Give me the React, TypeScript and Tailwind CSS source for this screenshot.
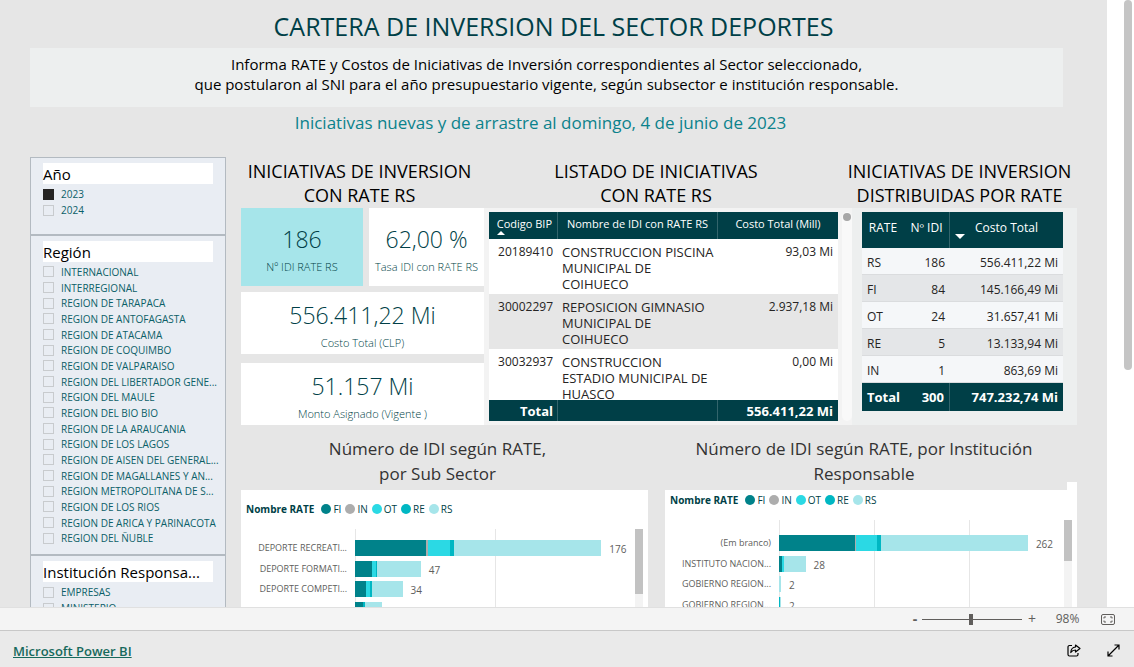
import React, { useState } from 'react';

type Serie = 'FI' | 'IN' | 'OT' | 'RE' | 'RS';

type ChartRow = {
  label: string;
  total: number;
  values: Partial<Record<Serie, number>>;
};

const series: { name: Serie; color: string }[] = [
  { name: 'FI', color: 'bg-[#00828a]' },
  { name: 'IN', color: 'bg-[#adadad]' },
  { name: 'OT', color: 'bg-[#2bd9e4]' },
  { name: 'RE', color: 'bg-[#00b7c3]' },
  { name: 'RS', color: 'bg-[#a6e5ea]' },
];

const regions = [
  'INTERNACIONAL',
  'INTERREGIONAL',
  'REGION DE TARAPACA',
  'REGION DE ANTOFAGASTA',
  'REGION DE ATACAMA',
  'REGION DE COQUIMBO',
  'REGION DE VALPARAISO',
  'REGION DEL LIBERTADOR GENE...',
  'REGION DEL MAULE',
  'REGION DEL BIO BIO',
  'REGION DE LA ARAUCANIA',
  'REGION DE LOS LAGOS',
  'REGION DE AISEN DEL GENERAL...',
  'REGION DE MAGALLANES Y AN...',
  'REGION METROPOLITANA DE S...',
  'REGION DE LOS RIOS',
  'REGION DE ARICA Y PARINACOTA',
  'REGION DEL ÑUBLE',
];

const iniciativas = [
  { codigo: '20189410', nombre: ['CONSTRUCCION PISCINA', 'MUNICIPAL DE', 'COIHUECO'], costo: '93,03 Mi' },
  { codigo: '30002297', nombre: ['REPOSICION GIMNASIO', 'MUNICIPAL DE', 'COIHUECO'], costo: '2.937,18 Mi' },
  { codigo: '30032937', nombre: ['CONSTRUCCION', 'ESTADIO MUNICIPAL DE', 'HUASCO'], costo: '0,00 Mi' },
];

const rates = [
  { rate: 'RS', idi: '186', costo: '556.411,22 Mi' },
  { rate: 'FI', idi: '84', costo: '145.166,49 Mi' },
  { rate: 'OT', idi: '24', costo: '31.657,41 Mi' },
  { rate: 'RE', idi: '5', costo: '13.133,94 Mi' },
  { rate: 'IN', idi: '1', costo: '863,69 Mi' },
];

const subSectores: ChartRow[] = [
  { label: 'DEPORTE RECREATI...', total: 176, values: { FI: 51, IN: 1, OT: 16, RE: 3, RS: 105 } },
  { label: 'DEPORTE FORMATI...', total: 47, values: { FI: 12, OT: 3, RE: 1, RS: 31 } },
  { label: 'DEPORTE COMPETI...', total: 34, values: { FI: 8, OT: 3, RE: 1, RS: 22 } },
  { label: '', total: 0, values: { FI: 6, RE: 1, RS: 12 } },
];

const instituciones: ChartRow[] = [
  { label: '(Em branco)', total: 262, values: { FI: 80, IN: 1, OT: 22, RE: 4, RS: 155 } },
  { label: 'INSTITUTO NACION...', total: 28, values: { FI: 3, OT: 2, RS: 23 } },
  { label: 'GOBIERNO REGION...', total: 2, values: { RS: 2 } },
  { label: 'GOBIERNO REGION...', total: 2, values: { RE: 1, RS: 1 } },
];

const CheckItem = ({ label, defaultChecked = false }: { label: string; defaultChecked?: boolean }) => (
  <label className="flex items-center gap-[7px] text-[10px] leading-4 text-[#0b5f68] whitespace-nowrap">
    <input
      type="checkbox"
      defaultChecked={defaultChecked}
      className="appearance-none size-[11px] shrink-0 border border-[#c8cbce] checked:bg-[#252423] checked:border-[#252423]"
    />
    {label}
  </label>
);

const Slicer = ({ title, children }: { title: string; children: React.ReactNode }) => (
  <fieldset className="min-w-0 border border-[#b3bac1] bg-[#e9edf3] px-3 pt-[5px]">
    <div className="h-[21px] bg-white text-[15px] leading-[22px] text-black">{title}</div>
    {children}
  </fieldset>
);

const Card = ({ value, label, className = '' }: { value: string; label: string; className?: string }) => (
  <div className={`flex flex-col items-center justify-center gap-1 text-[#003f47] ${className}`}>
    <span className="text-[23px] leading-8 font-light whitespace-nowrap">{value}</span>
    <span className="text-[11px] leading-4 font-light whitespace-nowrap">{label}</span>
  </div>
);

type BarChartProps = {
  rows: ChartRow[];
  max: number;
  ticks: number;
  thumb: string;
  inset: string;
};

const BarChart = ({ rows, max, ticks, thumb, inset }: BarChartProps) => (
  <div className="flex min-h-0 flex-1 overflow-hidden pr-[5px]">
    <div className={`w-[114px] shrink-0 pr-2 ${inset}`}>
      <div className="grid h-[82px] auto-rows-fr items-center">
        {rows.map((row, index) => (
          <div key={index} className="text-right text-[9px] leading-4 text-[#605e5c] whitespace-nowrap">
            {row.label}
          </div>
        ))}
      </div>
    </div>
    <div className="relative flex-1">
      <div className="absolute inset-0 flex">
        {Array.from({ length: ticks }, (_, index) => (
          <div key={index} className="flex-1 border-l border-[#e6e6e6]" />
        ))}
      </div>
      <div className={`relative ${inset}`}>
        <div className="grid h-[82px] auto-rows-fr">
          {rows.map((row, index) => (
            <div key={index} className="flex items-center">
              {series.map((serie) => (
                <div
                  key={serie.name}
                  className={`h-4 shrink-0 ${serie.color}`}
                  style={{ width: `${((row.values[serie.name] ?? 0) / max) * 100}%` }}
                />
              ))}
              {row.total > 0 && (
                <span className="pl-2 pt-0.5 text-[10px] leading-4 text-[#605e5c]">{row.total}</span>
              )}
            </div>
          ))}
        </div>
      </div>
    </div>
    <div className="w-2 bg-[#f3f3f3]">
      <div className={`w-full bg-[#c2c2c2] ${thumb}`} />
    </div>
  </div>
);

const Legend = () => (
  <div className="flex items-center pl-[5px] text-[10px] leading-4 text-[#003f47]">
    <span className="font-bold pr-[7px]">Nombre RATE</span>
    {series.map((serie) => (
      <span key={serie.name} className="flex items-center gap-0.5 pr-1">
        <span className={`size-[10px] rounded-full ${serie.color}`} />
        {serie.name}
      </span>
    ))}
  </div>
);

const ZoomBar = () => {
  const [zoom, setZoom] = useState(49);

  return (
    <div className="flex h-6 shrink-0 items-center justify-end border-y border-t-[#e0e0e0] border-b-[#c8c8c8] bg-[#f4f4f4] pr-[19px] text-[#605e5c]">
      <button type="button" aria-label="Alejar" className="w-[14px] text-sm leading-4 font-bold">-</button>
      <input
        type="range"
        aria-label="Zoom"
        value={zoom}
        onChange={(e) => setZoom(Number(e.target.value))}
        className="h-[11px] w-[100px] appearance-none bg-[linear-gradient(#605e5c,#605e5c)] bg-[length:100%_1px] bg-center bg-no-repeat [&::-webkit-slider-thumb]:h-[11px] [&::-webkit-slider-thumb]:w-1 [&::-webkit-slider-thumb]:appearance-none [&::-webkit-slider-thumb]:bg-[#605e5c]"
      />
      <button type="button" aria-label="Acercar" className="w-5 text-sm leading-4">+</button>
      <span className="w-[51px] text-center text-xs leading-4">98%</span>
      <button type="button" aria-label="Ajustar a la página" className="ml-2">
        <svg width="14" height="11" viewBox="0 0 14 11" fill="none" stroke="currentColor">
          <rect x="0.5" y="0.5" width="13" height="10" rx="1.5" />
          <path d="M5 3H3v1.5M3 6.5V8h2M9 3h2v1.5M11 6.5V8H9" />
        </svg>
      </button>
    </div>
  );
};

export default function App() {
  return (
    <div className="flex h-screen flex-col overflow-hidden bg-white font-['Open_Sans','Noto_Sans',sans-serif]">
      <div className="flex min-h-0 flex-1 overflow-hidden">
        <main className="flex min-w-0 flex-1 flex-col bg-[#e6e6e6] px-[30px]">
          <h1 className="pt-[9px] pb-[5px] text-center text-[25px] leading-[34px] text-[#003f47]">
            CARTERA DE INVERSION DEL SECTOR DEPORTES
          </h1>
          <div className="mr-3.5">
            <p className="h-[59px] bg-[#edefef] pt-1.5 text-center text-[15px] leading-5 text-black">
              Informa RATE y Costos de Iniciativas de Inversión correspondientes al Sector seleccionado,
              <br />
              que postularon al SNI para el año presupuestario vigente, según subsector e institución responsable.
            </p>
            <h2 className="pt-1 pr-3 text-center text-[17px] leading-6 text-[#0b828c]">
              Iniciativas nuevas y de arrastre al domingo, 4 de junio de 2023
            </h2>
          </div>

          <div className="mt-[22px] flex min-h-0 flex-1 gap-[15px] overflow-hidden">
            <aside className="w-[196px] shrink-0">
              <Slicer title="Año">
                <div className="h-[50px] pt-[2px]">
                  <CheckItem label="2023" defaultChecked />
                  <CheckItem label="2024" />
                </div>
              </Slicer>
              <Slicer title="Región">
                <div className="grid h-[292px] auto-rows-fr pt-[2px] pb-2">
                  {regions.map((region) => (
                    <CheckItem key={region} label={region} />
                  ))}
                </div>
              </Slicer>
              <Slicer title="Institución Responsa...">
                <div className="pt-[2px]">
                  <CheckItem label="EMPRESAS" />
                  <CheckItem label="MINISTERIO" />
                </div>
              </Slicer>
            </aside>

            <div className="flex min-w-0 flex-1 flex-col">
              <div className="grid grid-cols-[243fr_368fr_225fr] text-center text-lg leading-6 text-black">
                <h3 className="h-[51px] pt-0.5 pr-1.5">INICIATIVAS DE INVERSION<br />CON RATE RS</h3>
                <h3 className="h-[51px] pt-0.5 pr-6">LISTADO DE INICIATIVAS<br />CON RATE RS</h3>
                <h3 className="-mx-2 h-[51px] pt-0.5 pr-2.5">INICIATIVAS DE INVERSION<br />DISTRIBUIDAS POR RATE</h3>
              </div>

              <div className="grid grid-cols-[243fr_368fr_225fr]">
                <div className="flex flex-col">
                  <div className="flex gap-1.5">
                    <Card value="186" label="Nº IDI RATE RS" className="h-[78px] flex-[122] bg-[#a6e5ea] pt-1" />
                    <Card value="62,00 %" label="Tasa IDI con RATE RS" className="h-[78px] flex-[115] bg-white pt-1" />
                  </div>
                  <Card value="556.411,22 Mi" label="Costo Total (CLP)" className="mt-1.5 h-[62px] bg-white pt-1" />
                  <Card value="51.157 Mi" label="Monto Asignado (Vigente )" className="mt-[9px] h-[62px] bg-white pt-1" />
                </div>

                <div className="flex h-[217px] gap-1 bg-[#f3f3f3] pt-1 pl-[5px] pb-1">
                  <div className="flex-1 overflow-hidden">
                    <table className="w-full table-fixed border-separate border-spacing-0 text-xs leading-4 text-[#252423]">
                      <thead className="sticky top-0 text-[11px] whitespace-nowrap text-white">
                        <tr className="h-[27px] bg-[#003f47] align-top">
                          <th className="w-[69px] border-r border-[#33656c] pt-1 pr-[5px] text-right font-normal">
                            <span className="relative">
                              Codigo BIP
                              <span className="absolute top-[15px] left-0 border-x-4 border-b-4 border-x-transparent border-b-white" />
                            </span>
                          </th>
                          <th className="w-[160px] border-r border-[#33656c] pt-1 font-normal">Nombre de IDI con RATE RS</th>
                          <th className="pt-1 font-normal">Costo Total (Mill)</th>
                        </tr>
                      </thead>
                      <tbody>
                        {iniciativas.map((item) => (
                          <tr key={item.codigo} className="h-[55px] bg-white align-top even:bg-[#e6e6e6]">
                            <td className="pt-[5px] pr-[5px] text-right">{item.codigo}</td>
                            <td className="pt-[5px] pl-1 text-[13px] leading-4 whitespace-nowrap">
                              {item.nombre.map((line) => (
                                <div key={line}>{line}</div>
                              ))}
                            </td>
                            <td className="pt-[5px] pr-[5px] text-right">{item.costo}</td>
                          </tr>
                        ))}
                      </tbody>
                      <tfoot className="sticky bottom-0 text-[13px] font-bold text-white">
                        <tr className="h-[21px] bg-[#003f47]">
                          <td className="border-r border-[#33656c] pr-1 text-right">Total</td>
                          <td className="border-r border-[#33656c]" />
                          <td className="pr-[5px] text-right">556.411,22 Mi</td>
                        </tr>
                      </tfoot>
                    </table>
                  </div>
                  <div className="w-[10px] rounded-full bg-[#f9f9f9] p-px">
                    <div className="size-2 rounded-full bg-[#a6a6a6]" />
                  </div>
                </div>

                <div className="bg-[#edefef] pt-1 pr-3.5 pl-2.5">
                  <table className="w-full table-fixed border-separate border-spacing-0 text-xs leading-4 text-[#252423]">
                    <thead>
                      <tr className="h-9 bg-[#003f47] text-white">
                        <th className="w-[42px] pb-1 font-normal">RATE</th>
                        <th className="w-[46px] border-r border-[#33656c] pb-1 font-normal">Nº IDI</th>
                        <th className="pb-1 font-normal">
                          <span className="relative">
                            Costo Total
                            <span className="absolute top-[15px] -left-5 border-x-[5px] border-t-[5px] border-x-transparent border-t-white" />
                          </span>
                        </th>
                      </tr>
                    </thead>
                    <tbody>
                      {rates.map((item) => (
                        <tr key={item.rate} className="h-[27px] bg-[#f5f7f9] even:bg-[#e4e6e8]">
                          <td className="border-b border-[#dadcde] pt-1 pl-[5px]">{item.rate}</td>
                          <td className="border-b border-[#dadcde] pt-1 pr-[5px] text-right">{item.idi}</td>
                          <td className="border-b border-[#dadcde] pt-1 pr-[5px] text-right">{item.costo}</td>
                        </tr>
                      ))}
                    </tbody>
                    <tfoot className="text-[13px] font-bold text-white">
                      <tr className="h-[28px] bg-[#003f47]">
                        <td className="pl-[5px]">Total</td>
                        <td className="border-r border-[#33656c] pr-[5px] text-right">300</td>
                        <td className="pr-[5px] text-right">747.232,74 Mi</td>
                      </tr>
                    </tfoot>
                  </table>
                </div>
              </div>

              <div className="mt-[11px] grid min-h-0 flex-1 grid-cols-[407fr_412fr] gap-[17px]">
                <section className="flex min-h-0 flex-col">
                  <h3 className="h-[54px] pr-3.5 text-center text-[17px] leading-[25px] text-[#333]">
                    Número de IDI según RATE,<br />por Sub Sector
                  </h3>
                  <div className="flex min-h-0 flex-1 flex-col bg-white pt-[11px]">
                    <Legend />
                    <div className="flex min-h-0 flex-1 pt-3">
                      <BarChart rows={subSectores} max={200} ticks={2} thumb="h-[65px]" inset="pt-[9px]" />
                    </div>
                  </div>
                </section>
                <section className="flex min-h-0 flex-col">
                  <h3 className="h-[54px] pr-3.5 text-center text-[17px] leading-[25px] text-[#333]">
                    Número de IDI según RATE, por Institución<br />Responsable
                  </h3>
                  <div className="relative flex min-h-0 flex-1 flex-col bg-white pt-0.5">
                    <span className="absolute -top-2 right-0 h-2 w-2.5 bg-white" />
                    <Legend />
                    <div className="flex min-h-0 flex-1 pt-3">
                      <BarChart rows={instituciones} max={300} ticks={3} thumb="h-[41px]" inset="pt-[13px]" />
                    </div>
                  </div>
                </section>
              </div>
            </div>
          </div>
        </main>
        <div className="w-[27px] shrink-0 bg-white pl-[17px]">
          <div className="h-[61%] w-2 rounded-full bg-[#c5c5c5]" />
        </div>
      </div>

      <ZoomBar />

      <footer className="flex h-9 shrink-0 items-center justify-between bg-[#eaeaea] pr-3.5 pl-[13px]">
        <a href="#" className="pt-1 text-[13px] leading-5 font-semibold text-[#17695c] underline">Microsoft Power BI</a>
        <div className="flex items-center gap-[26px] pt-0.5 text-black">
          <button type="button" aria-label="Compartir">
            <svg width="14" height="13" viewBox="0 0 14 13" fill="none" stroke="currentColor" strokeWidth="1.2">
              <path d="M5 1.500H2.500A1.500 1.500 0 0 0 1 3v7.500A1.500 1.500 0 0 0 2.500 12h7a1.500 1.500 0 0 0 1.500-1.500V9" />
              <path d="M8.500 1L13 4.500 8.500 8V6C6.500 6 5 6.700 3.800 8.500 4 5.500 5.500 3.200 8.500 3z" strokeLinejoin="round" />
            </svg>
          </button>
          <button type="button" aria-label="Pantalla completa">
            <svg width="13" height="13" viewBox="0 0 13 13" fill="none" stroke="currentColor" strokeWidth="1.2">
              <path d="M1 12L12 1M7.500 1H12v4.500M5.500 12H1V7.500" />
            </svg>
          </button>
        </div>
      </footer>
    </div>
  );
}
